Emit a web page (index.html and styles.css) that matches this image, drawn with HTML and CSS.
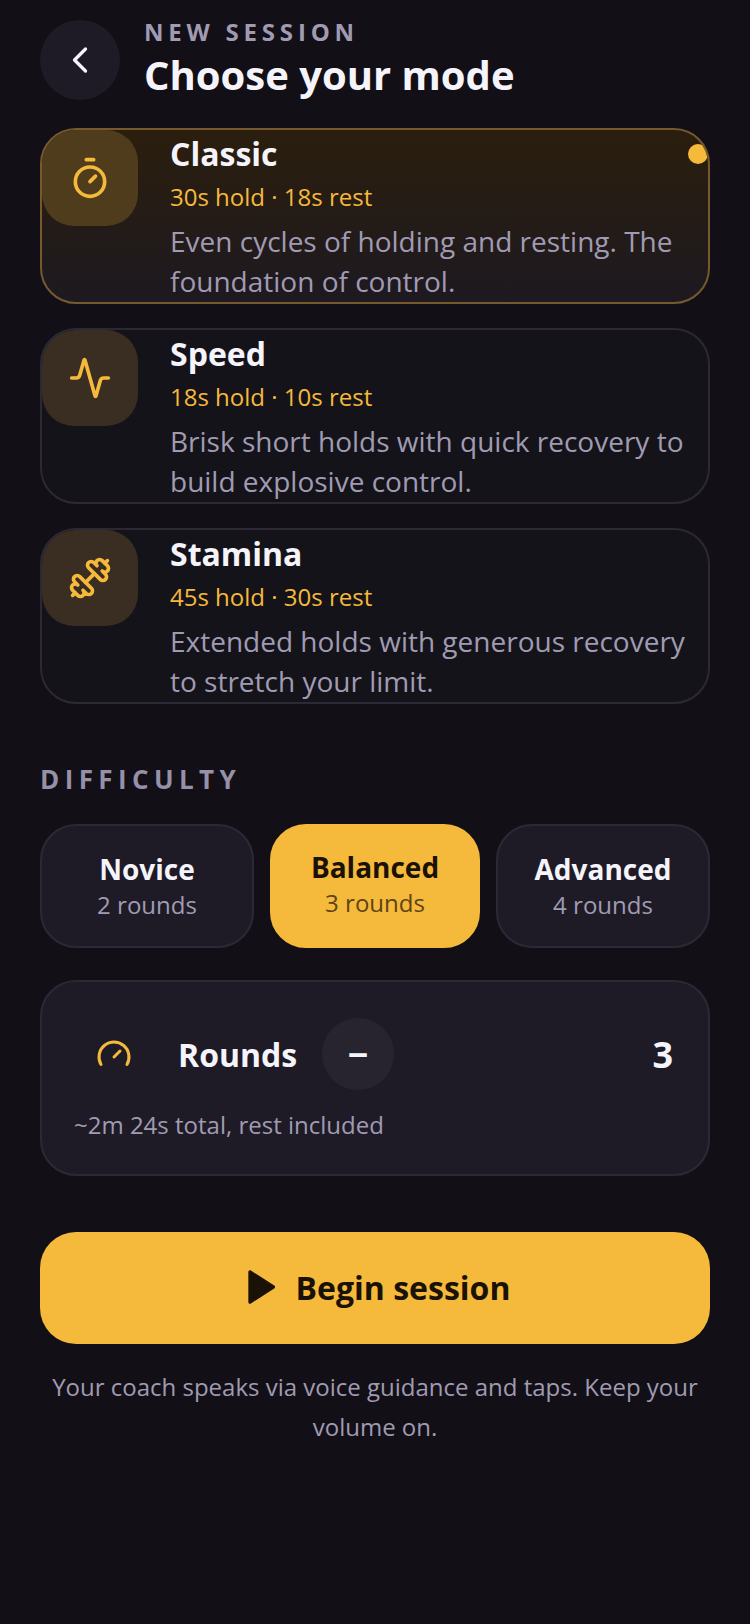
FILE: index.html
```html
<!DOCTYPE html>
<html lang="en">
<head>
  <meta charset="UTF-8">
  <meta name="viewport" content="width=device-width, initial-scale=1.0">
  <title>Choose your mode</title>
  <link rel="stylesheet" href="styles.css">
</head>
<body>
  <div class="main-container">
    <header class="top-bar">
      <button class="back-btn" aria-label="Back">
        <svg width="44" height="44" viewBox="0 0 24 24" fill="none" stroke="#f6f4fb" stroke-width="1.8" stroke-linecap="round" stroke-linejoin="round"><path d="m15 18-6-6 6-6"/></svg>
      </button>
      <div class="top-text">
        <div class="eyebrow">NEW SESSION</div>
        <h1>Choose your mode</h1>
      </div>
    </header>

    <div class="mode-list">
      <div class="mode-card selected">
        <div class="mode-icon">
          <svg width="44" height="44" viewBox="0 0 24 24" fill="none" stroke="#f5b93b" stroke-width="2" stroke-linecap="round" stroke-linejoin="round"><line x1="10" x2="14" y1="2" y2="2"/><line x1="12" x2="15" y1="14" y2="11"/><circle cx="12" cy="14" r="8"/></svg>
        </div>
        <div class="mode-text">
          <div class="mode-name">Classic</div>
          <div class="mode-times">30s hold · 18s rest</div>
          <div class="mode-desc">Even cycles of holding and resting. The foundation of control.</div>
        </div>
        <span class="mode-dot"></span>
      </div>

      <div class="mode-card">
        <div class="mode-icon">
          <svg width="44" height="44" viewBox="0 0 24 24" fill="none" stroke="#f5b93b" stroke-width="2" stroke-linecap="round" stroke-linejoin="round"><path d="M22 12h-2.48a2 2 0 0 0-1.93 1.46l-2.35 8.36a.25.25 0 0 1-.48 0L9.24 2.18a.25.25 0 0 0-.48 0l-2.35 8.36A2 2 0 0 1 4.49 12H2"/></svg>
        </div>
        <div class="mode-text">
          <div class="mode-name">Speed</div>
          <div class="mode-times">18s hold · 10s rest</div>
          <div class="mode-desc">Brisk short holds with quick recovery to build explosive control.</div>
        </div>
      </div>

      <div class="mode-card">
        <div class="mode-icon">
          <svg width="44" height="44" viewBox="0 0 24 24" fill="none" stroke="#f5b93b" stroke-width="2" stroke-linecap="round" stroke-linejoin="round"><path d="M17.596 12.768a2 2 0 1 0 2.829-2.829l-1.768-1.767a2 2 0 0 0 2.828-2.829l-2.828-2.828a2 2 0 0 0-2.829 2.828l-1.767-1.768a2 2 0 1 0-2.829 2.829z"/><path d="m2.5 21.5 1.4-1.4"/><path d="m20.1 3.9 1.4-1.4"/><path d="M5.343 21.485a2 2 0 1 0 2.829-2.828l1.767 1.768a2 2 0 1 0 2.829-2.829l-6.364-6.364a2 2 0 1 0-2.829 2.829l1.768 1.767a2 2 0 0 0-2.828 2.829z"/><path d="m9.6 14.4 4.8-4.8"/></svg>
        </div>
        <div class="mode-text">
          <div class="mode-name">Stamina</div>
          <div class="mode-times">45s hold · 30s rest</div>
          <div class="mode-desc">Extended holds with generous recovery to stretch your limit.</div>
        </div>
      </div>
    </div>

    <div class="section-label">DIFFICULTY</div>
    <div class="difficulty-row">
      <div class="chip chip-novice">
        <div class="chip-name">Novice</div>
        <div class="chip-sub">2 rounds</div>
      </div>
      <div class="chip chip-balanced active">
        <div class="chip-name">Balanced</div>
        <div class="chip-sub">3 rounds</div>
      </div>
      <div class="chip chip-advanced">
        <div class="chip-name">Advanced</div>
        <div class="chip-sub">4 rounds</div>
      </div>
    </div>

    <div class="rounds-card">
      <div class="rounds-row">
        <svg class="rounds-icon" width="36" height="36" viewBox="0 0 24 24" fill="none" stroke="#f5b93b" stroke-width="2" stroke-linecap="round" stroke-linejoin="round"><path d="m12 14 4-4"/><path d="M3.34 19a10 10 0 1 1 17.32 0"/></svg>
        <div class="rounds-label">Rounds</div>
        <div class="rounds-minus">−</div>
        <div class="rounds-value">3</div>
      </div>
      <div class="rounds-note">~2m 24s total, rest included</div>
    </div>

    <button class="begin-btn">
      <svg width="40" height="40" viewBox="0 0 24 24" fill="#1a1206" stroke="#1a1206" stroke-width="2" stroke-linejoin="round"><polygon points="6 3 20 12 6 21 6 3"/></svg>
      <span>Begin session</span>
    </button>

    <p class="foot-note">Your coach speaks via voice guidance and taps. Keep your volume on.</p>
  </div>
</body>
</html>
```

FILE: styles.css
```css
* {
  box-sizing: border-box;
}
body {
  margin: 0;
  background-color: #121016;
  color: #f6f4fb;
  font-family: "Open Sans", "Noto Sans", sans-serif;
  min-height: 1624px;
}
.main-container {
  padding: 15px 40px 0;
}
.top-bar {
  display: flex;
  align-items: flex-start;
  gap: 24px;
  height: 89px;
}
.back-btn {
  flex: none;
  width: 80px;
  height: 80px;
  margin-top: 5px;
  border: none;
  border-radius: 50%;
  background: #1e1b27;
  display: flex;
  align-items: center;
  justify-content: center;
  padding: 0;
}
.eyebrow {
  font-size: 24px;
  line-height: 33px;
  font-weight: 700;
  letter-spacing: 4.8px;
  color: #a09bb2;
}
h1 {
  margin: 0;
  font-size: 40px;
  line-height: 54px;
  font-weight: 700;
  color: #f6f4fb;
}
.mode-list {
  display: flex;
  flex-direction: column;
  gap: 24px;
  margin-top: 24px;
}
.mode-card {
  position: relative;
  display: flex;
  gap: 32px;
  height: 176px;
  border: 2px solid #2c2935;
  border-radius: 36px;
  overflow: hidden;
  background: #15131a;
}
.mode-card.selected {
  border-color: #76592f;
  background: linear-gradient(180deg, #2b1e0d 0%, #1d1920 100%);
}
.mode-icon {
  flex: none;
  width: 96px;
  height: 96px;
  border-radius: 32px;
  background: #3a2e22;
  display: flex;
  align-items: center;
  justify-content: center;
}
.selected .mode-icon {
  background: #4f3c1c;
}
.mode-text {
  flex: 1;
  min-width: 0;
}
.mode-name {
  font-size: 32px;
  line-height: 48px;
  font-weight: 700;
  color: #f6f4fb;
}
.mode-times {
  font-size: 24px;
  line-height: 32px;
  color: #f5b93b;
  margin-top: 3px;
}
.mode-desc {
  font-size: 28px;
  line-height: 40px;
  color: #a09bb2;
  margin-top: 8px;
  padding-right: 8px;
}
.mode-dot {
  position: absolute;
  top: 14px;
  right: 0;
  width: 20px;
  height: 20px;
  border-radius: 50%;
  background: #f5b93b;
}
.section-label {
  margin-top: 57px;
  font-size: 26px;
  line-height: 36px;
  font-weight: 700;
  letter-spacing: 5.4px;
  color: #9691a8;
}
.difficulty-row {
  display: flex;
  gap: 16px;
  margin-top: 27px;
}
.chip {
  height: 124px;
  border: 2px solid #2c2935;
  border-radius: 36px;
  background: #1e1b27;
  text-align: center;
  padding-top: 24px;
}
.chip-novice {
  width: 214px;
}
.chip-balanced {
  width: 210px;
}
.chip-advanced {
  width: 214px;
}
.chip.active {
  background: #f5b93b;
  border-color: #f5b93b;
  padding-top: 22px;
}
.chip-name {
  font-size: 28px;
  line-height: 39px;
  font-weight: 700;
  color: #f6f4fb;
}
.chip-sub {
  font-size: 24px;
  line-height: 32px;
  color: #a09bb2;
}
.active .chip-name {
  color: #1a1206;
}
.active .chip-sub {
  color: #5e4417;
}
.rounds-card {
  margin-top: 32px;
  height: 196px;
  border: 2px solid #2c2935;
  border-radius: 36px;
  background: #1e1b27;
  padding: 36px 35px 0 32px;
}
.rounds-row {
  display: flex;
  align-items: center;
  height: 72px;
}
.rounds-icon {
  margin-left: 22px;
}
.rounds-label {
  margin-left: 46px;
  font-size: 32px;
  font-weight: 700;
}
.rounds-minus {
  margin-left: 25px;
  width: 72px;
  height: 72px;
  border-radius: 50%;
  background: #272430;
  display: flex;
  align-items: center;
  justify-content: center;
  font-size: 36px;
  font-weight: 700;
}
.rounds-value {
  margin-left: auto;
  font-size: 36px;
  font-weight: 700;
}
.rounds-note {
  margin-top: 19px;
  font-size: 24px;
  line-height: 32px;
  color: #a09bb2;
}
.begin-btn {
  margin-top: 56px;
  width: 100%;
  height: 112px;
  padding: 0 0 2px;
  border: none;
  border-radius: 36px;
  background: #f5b93b;
  color: #1a1206;
  display: flex;
  align-items: center;
  justify-content: center;
  gap: 16px;
  font-family: inherit;
  font-size: 32px;
  font-weight: 700;
}
.foot-note {
  margin: 23px 0 0;
  font-size: 24px;
  line-height: 40px;
  text-align: center;
  color: #a09bb2;
}
```
